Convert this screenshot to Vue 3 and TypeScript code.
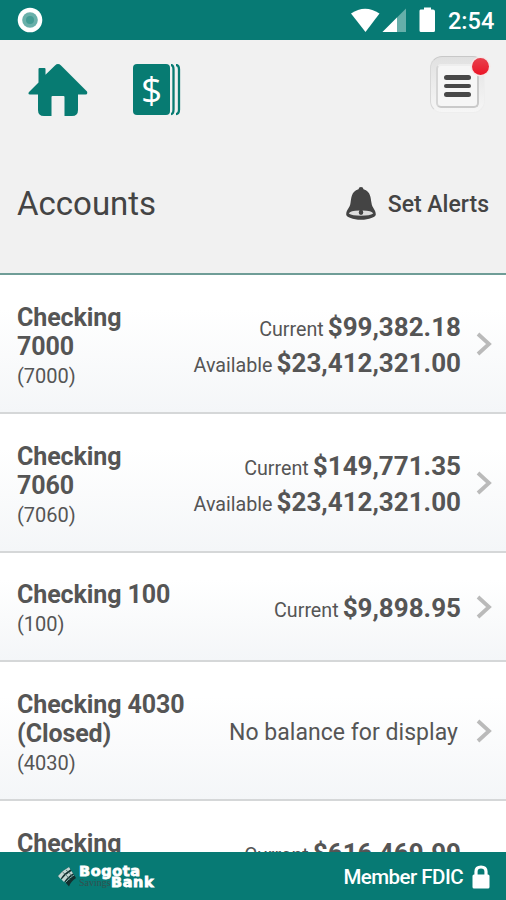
<script setup lang="ts">
interface Balance {
  label: string
  amount: string
}
interface Account {
  name: string[]
  number: string
  balances: Balance[]
}

const accounts: Account[] = [
  {
    name: ['Checking', '7000'],
    number: '(7000)',
    balances: [
      { label: 'Current', amount: '$99,382.18' },
      { label: 'Available', amount: '$23,412,321.00' },
    ],
  },
  {
    name: ['Checking', '7060'],
    number: '(7060)',
    balances: [
      { label: 'Current', amount: '$149,771.35' },
      { label: 'Available', amount: '$23,412,321.00' },
    ],
  },
  { name: ['Checking 100'], number: '(100)', balances: [{ label: 'Current', amount: '$9,898.95' }] },
  { name: ['Checking 4030', '(Closed)'], number: '(4030)', balances: [] },
]
const next: Balance = { label: 'Current', amount: '$616,469.99' }
</script>

<template>
  <div class="screen">
    <div class="status">
      <svg class="record" width="26" height="26" viewBox="0 0 26 26">
        <circle cx="13" cy="13" r="12.3" fill="#fff" />
        <circle cx="13" cy="13" r="7.8" fill="#69b0aa" />
        <circle cx="13" cy="13" r="4" fill="#439c94" />
      </svg>
      <svg class="signals" width="86" height="28" viewBox="0 0 86 28">
        <path d="M1 7.500Q15-2 29.500 7.500L15.500 26Z" fill="#fff" />
        <path d="M32.500 26L56 2.500V26Z" fill="#66afaa" />
        <path d="M32.500 26L47 11.500V26Z" fill="#fff" />
        <path d="M70.500 3.500H74V1.500H81V3.500H83Q85 3.500 85 5.500V24.500Q85 26 83.500 26H71Q69.500 26 69.500 24.500V5Q69.500 3.500 70.500 3.500Z" fill="#fff" />
      </svg>
      <span class="clock">2:54</span>
    </div>

    <header class="toolbar">
      <nav class="nav">
        <svg class="home" width="60" height="54" viewBox="0 0 60 54">
          <path
            d="M10.500 5Q10.500 4 11.500 4H16.500Q17.500 4 17.500 5V10.700L27 1.500Q30 -1.300 33 1.500L59 27.500Q60 30.500 57.500 30.500H50V46Q50 52 44 52H36.500V33Q36.500 32 35.500 32H24.500Q23.500 32 23.500 33V52H16Q10 52 10 46V30.500H2Q-.5 30.500 1 28L10.500 18.500Z"
            fill="#077b72"
          />
        </svg>
        <svg class="money" width="48" height="52" viewBox="0 0 48 52">
          <rect x="0" y="0" width="37" height="51" rx="4" fill="#077b72" />
          <path d="M38 1Q40.500 1 40.500 5.500V45.500Q40.500 50 38 50M43 1Q46 1 46 5.500V45.500Q46 50 43 50" fill="none" stroke="#077b72" stroke-width="2.300" />
          <text x="18.500" y="38.500" text-anchor="middle" class="dollar">$</text>
        </svg>
      </nav>
      <div class="menu">
        <div class="menu-face">
          <i></i><i></i><i></i>
        </div>
        <b class="dot"></b>
      </div>
    </header>

    <div class="title-bar">
      <h1>Accounts</h1>
      <div class="alerts">
        <svg width="30" height="33" viewBox="0 0 30 33">
          <path d="M15 0Q17.300 0 17.500 2.200C25 4.500 24.500 11 25.500 16C26 21 29.800 22.500 29.800 27.500C29.800 30 23 32.800 15 32.800S.2 30 .2 27.500C.2 22.500 4 21 4.500 16C5.500 11 5 4.500 12.500 2.200Q12.700 0 15 0Z" fill="#444" />
          <path d="M2.800 26.600Q4 23.500 13.500 23.500Q12 27.500 15 27.500T16.500 23.500Q26 23.500 27.200 26.600Q24 28.800 15 28.800T2.800 26.600Z" fill="#ddd" />
          <circle cx="15" cy="25.500" r="2.200" fill="#444" />
        </svg>
        <span>Set Alerts</span>
      </div>
    </div>

    <main class="list">
      <div v-for="a in accounts" :key="a.number" class="row" :class="{ single: a.name.length === 1 }">
        <div class="who">
          <div v-for="line in a.name" :key="line" class="name">{{ line }}</div>
          <div class="number">{{ a.number }}</div>
        </div>
        <div class="balances">
          <div v-for="b in a.balances" :key="b.label" class="balance">
            <span class="label">{{ b.label }}</span><span class="amount">{{ b.amount }}</span>
          </div>
          <div v-if="!a.balances.length" class="none">No balance for display</div>
        </div>
        <svg class="chevron" width="16" height="24" viewBox="0 0 16 24">
          <path d="M2 2L13 12L2 22" fill="none" stroke="#bababa" stroke-width="3.800" />
        </svg>
      </div>
      <div class="row next">
        <div class="name">Checking</div>
        <div class="balance">
          <span class="label">{{ next.label }}</span><span class="amount">{{ next.amount }}</span>
        </div>
      </div>
    </main>

    <footer class="footer">
      <div class="brand">
        <svg width="18" height="20" viewBox="0 0 18 20">
          <path d="M0 9Q5 3 11 0Q14 5 18 11Q13 14 11 19.500Q6 13 0 9Z" fill="#132f2e" />
          <path d="M0 9Q5 3 11 0L12.500 2.500Q6 6 2.500 12ZM3.500 12.500Q8 7 13.500 4L15 6.500Q10 9 6 15Z" fill="#c3d6d3" />
          <path d="M7.500 15.500Q11 11 16 8" stroke="#7fb3ae" stroke-width="1" fill="none" />
          <path d="M4.500 5Q9 8 12 13M8 3Q12 6 15 10" stroke="#3f6664" stroke-width="0.800" fill="none" />
        </svg>
        <div class="brand-text">
          <div class="brand-top">Bogota</div>
          <div class="brand-bottom"><span class="savings">Savings</span><span class="bank">Bank</span></div>
        </div>
      </div>
      <div class="member">
        <span>Member FDIC</span>
        <svg width="18" height="24" viewBox="0 0 18 24">
          <path d="M4 11V6.500Q4 2 9 2T14 6.500V11" fill="none" stroke="#fff" stroke-width="3.200" />
          <rect x="0.500" y="9.500" width="17" height="14" rx="1.500" fill="#fff" />
        </svg>
      </div>
    </footer>
  </div>
</template>

<style>
body {
  margin: 0;
}
</style>

<style scoped>
.screen {
  width: 506px;
  height: 900px;
  display: flex;
  flex-direction: column;
  overflow: hidden;
  background: #f1f1f1;
  color: #555;
  font-family: Roboto, "Liberation Sans", sans-serif;
}
.status {
  height: 40px;
  flex: none;
  box-sizing: border-box;
  padding: 0 12px 0 17px;
  display: flex;
  align-items: center;
  background: #077a74;
}
.signals {
  margin: 0 12px 0 auto;
}
.clock {
  width: 46px;
  color: #fff;
  font-size: 23.500px;
  font-weight: 500;
  line-height: 28px;
  padding-top: 2px;
}
.toolbar {
  height: 95px;
  box-sizing: border-box;
  flex: none;
  display: flex;
  justify-content: space-between;
  align-items: flex-start;
  padding: 16px 20px 0 28px;
}
.nav {
  display: flex;
  gap: 45px;
  padding-top: 8px;
}
.dollar {
  font-family: "Open Sans", sans-serif;
  font-size: 37px;
  font-weight: 500;
  fill: #fff;
}
.menu {
  position: relative;
  width: 55px;
  height: 57px;
  box-sizing: border-box;
  padding: 7px 6px 6px 5px;
  margin-right: 1px;
  border-radius: 12px;
  border: 1px solid #eee;
  border-top-color: #c8c8c8;
  border-left-color: #d8d8d8;
  background: linear-gradient(#e1e1e1, #ececec 50%, #f6f6f6);
}
.menu-face {
  height: 44px;
  box-sizing: border-box;
  width: 43px;
  border: 2px solid #cacaca;
  border-top-color: #eee;
  border-left-color: #d6d6d6;
  border-radius: 5px;
  background: #f6f6f6;
  display: flex;
  flex-direction: column;
  align-items: center;
  justify-content: center;
  gap: 4px;
}
.menu-face i {
  width: 27px;
  height: 4.500px;
  border-radius: 3px;
  background: #484848;
}
.dot {
  position: absolute;
  top: 1px;
  right: -5px;
  width: 17px;
  height: 17px;
  border-radius: 50%;
  background: linear-gradient(#e8404c, #eb1426);
  box-shadow: 0 0 0 1.500px #f6e6e6;
}
.title-bar {
  height: 140px;
  box-sizing: border-box;
  flex: none;
  display: flex;
  align-items: center;
  justify-content: space-between;
  padding: 0 17px 0 17px;
  border-bottom: 2px solid #6f9d97;
}
h1 {
  margin: 0;
  font-size: 33px;
  font-weight: 400;
  line-height: 40px;
  color: #444;
}
.alerts {
  display: flex;
  align-items: center;
  gap: 12px;
  font-size: 23px;
  font-weight: 500;
  color: #444;
}
.alerts svg {
  margin-top: -2px;
}
.list {
  flex: 1;
  min-height: 0;
  overflow: hidden;
}
.row {
  height: 139px;
  box-sizing: border-box;
  display: flex;
  align-items: center;
  padding: 0 14px 0 17px;
  border-bottom: 2px solid #d5d7d8;
  background: linear-gradient(#fff 25%, #f4f6f8);
}
.row.single {
  height: 109px;
}
.who {
  padding-top: 6px;
}
.name {
  font-size: 25px;
  line-height: 29px;
  font-weight: 700;
  white-space: nowrap;
  letter-spacing: -0.100px;
}
.number {
  font-size: 20px;
  line-height: 30px;
}
.balances {
  margin-left: auto;
  padding-top: 3px;
}
.balance {
  height: 36px;
  display: flex;
  align-items: baseline;
  justify-content: flex-end;
  line-height: 36px;
  white-space: nowrap;
}
.label {
  font-size: 19.700px;
  margin-right: 4px;
}
.amount {
  font-size: 26px;
  font-weight: 700;
}
.none {
  font-size: 23px;
  letter-spacing: 0.040px;
  padding-right: 3px;
}
.chevron {
  margin-left: 15px;
}
.row.next {
  height: 52px;
  align-items: flex-start;
  justify-content: space-between;
  padding: 28px 45px 0 17px;
  border: 0;
  background: #fff;
}
.row.next .balance {
  margin-top: 6px;
}
.footer {
  height: 48px;
  box-sizing: border-box;
  flex: none;
  display: flex;
  align-items: center;
  justify-content: space-between;
  padding: 2px 16px 0 58px;
  background: #077a74;
  color: #fff;
}
.brand {
  display: flex;
  align-items: center;
  gap: 3px;
}
.brand-text {
  font-family: "DejaVu Sans", sans-serif;
  font-weight: 700;
  font-size: 14.500px;
  line-height: 11px;
  letter-spacing: 0.600px;
  -webkit-text-stroke: 0.800px #fff;
}
.brand-bottom {
  display: flex;
  align-items: center;
}
.savings {
  width: 32px;
  font-family: "Liberation Serif", serif;
  font-size: 10px;
  font-weight: 400;
  letter-spacing: 0;
  color: #34504f;
  -webkit-text-stroke: 0;
}
.member {
  display: flex;
  align-items: center;
  gap: 9px;
  font-size: 20.500px;
  font-weight: 500;
  letter-spacing: -0.540px;
}
</style>
